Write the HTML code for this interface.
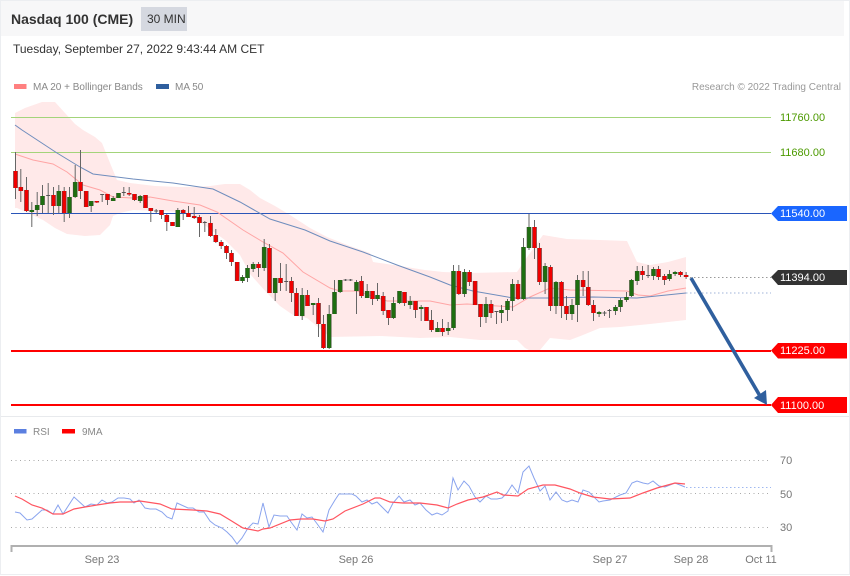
<!DOCTYPE html>
<html><head><meta charset="utf-8"><style>
html,body{margin:0;padding:0;background:#fff}
#c{position:relative;width:850px;height:576px;overflow:hidden;font-family:"Liberation Sans",sans-serif}
svg{position:absolute;left:0;top:0}
</style></head><body><div id="c">
<svg width="850" height="576" viewBox="0 0 850 576" font-family="Liberation Sans, sans-serif">
<rect x="0.5" y="0.5" width="849" height="574" fill="#fff" stroke="#eceef1"/>
<rect x="1" y="1" width="843" height="35" fill="#f7f7f8"/>
<rect x="141" y="7" width="46" height="24" fill="#d5d8e0"/>
<text x="11" y="24" font-size="14" font-weight="bold" fill="#333">Nasdaq 100 (CME)</text>
<text x="147" y="23" font-size="12" fill="#333">30 MIN</text>
<text x="13" y="53" font-size="12" fill="#333">Tuesday, September 27, 2022 9:43:44 AM CET</text>
<rect x="14" y="84" width="12.500" height="5" fill="#ff8080"/>
<text x="33" y="90" font-size="10" fill="#888">MA 20 + Bollinger Bands</text>
<rect x="156" y="84" width="13" height="5" fill="#2f5f9e"/>
<text x="175" y="90" font-size="10" fill="#888">MA 50</text>
<text x="841" y="90" font-size="10" fill="#999" text-anchor="end">Research © 2022 Trading Central</text>

<polygon fill="#ffe9e9" points="15,113 25,108 42,102 55,102 65,113 75,124 83,130 95,137 102,143 110,163 117,180 130,183 155,186 180,187 195,187 210,186 225,184 240,184 250,190 260,198 275,206 290,215 310,228 327,237 350,246 370,253 373,262 400,266 425,270 443,272 470,273 517,272 525,260 543,235 567,239 600,240 627,241 637,262 650,265 668,262 686,257 686,320 650,324 620,327 600,328 583,335 570,340 550,338 540,350 533,352 525,348 517,340 480,340 450,337 420,338 380,336 330,337 307,318 293,315 280,306 267,293 250,274 240,255 225,240 207,227 195,218 183,212 160,211 133,210 120,213 113,216 110,225 100,235 85,236 67,234 55,228 43,220 30,214 17,208 15,208"/>

<path d="M11 117.500H771M11 152.500H771" stroke="#a3d47a" stroke-width="1" fill="none"/>
<path d="M11 213.500H771" stroke="#2a55b8" stroke-width="1" fill="none"/>
<path d="M690 277.500H771" stroke="#999" stroke-width="1" stroke-dasharray="1.500 2.500" fill="none"/>
<path d="M686 293H771" stroke="#9fb3d8" stroke-width="1" stroke-dasharray="1.500 2.500" fill="none"/>
<path d="M11 351H771M11 405H771" stroke="#f00" stroke-width="2" fill="none"/>

<polyline fill="none" stroke="#ffa5a5" stroke-width="1" points="15,154 33,160 53,164 67,172 83,185 100,190 113,197 133,198 150,197 173,201 200,205 217,212 243,230 263,242 283,253 303,272 330,288 340,291 357,291 387,301 430,301 450,305 467,304 513,307 530,297 550,288 570,290 627,291 638,295 650,296 668,291 686,288"/>
<polyline fill="none" stroke="#6f8dbd" stroke-width="1" points="15,125 22,130 57,153 80,167 93,174 133,179 173,183 213,189 240,202 270,219 305,230 330,241 363,252 397,265 430,277 450,285 473,291 513,298 550,298 593,297 637,298 686,293"/>

<defs>
<path id="r" fill="none" d="M15 171V188M20.300 187V191M26 190V211M53 195V206M63.700 191V213M80 182V191M85.700 191V207M96.300 201V202.500M107 194V200M128.700 193V194.500M134 194V200M145 195V208M150.300 208V211M161 210V215M166.300 215V222M172 222V226M182.700 210V213M188 213V217M193.700 216V218M199 217V223M210 223V236M215.300 235V242M220.700 242V246M226 246V253M231 253V262M236.700 262V281M258 264V268M269 248V293M280 278V283M291 281V293M296 293V316M307 295V306M318 303V324M323 324V348M361 281V296M372 291V299M382.700 296V311M388 310V318M404 292V303M415 301V310M426 307V321M431 320V330M442 328V332M458.300 271V294M469 272V282M474.600 281V305M480 304V317M490.600 304V313M517.500 284V299M534 227V248M539 248V282M550 267V306M561 282V306M566 306V314M582.600 280V287M587.800 287V305M593 305V313M642 271V275M658 269V277M664 276V280M680 272V275M685.600 275V277"/>
<path id="g" fill="none" d="M31.300 210V212M36.700 205V210M42 196V205M58.300 191V206M69 197V213M74.700 182V197M90.700 201V206M112.700 198V201M118 193V198M139.700 196V201M177.300 210V227M242 277V281M247 268V278M252.700 264V269M263.700 247V268M274.700 278V293M301.700 295V316M312.700 303V305M328.700 314V348M334 292V314M339.700 280V292M356 282V291M366.700 291V298M377 295V299M393 303V318M399 291V303M409.700 301V305M420.700 307V309M437 328V332M447.700 328V331M453 271V328M464 272V294M485.500 304V317M501 310V313M507 301V310M512 284V301M523 247V299M528.500 227V248M544.600 266V282M555.500 282V306M571.500 305V314M577 280V305M598.600 312V314M615 307V311M620 300V307M626 297V300M631 280V296M636.700 271V281M653 269V276M669 274V279M674.600 272V274"/>
</defs>
<g transform="translate(0.500 0)">
<path fill="none" stroke="#666" stroke-width="1" d="M15 152V199M20.300 169V202M26 177V212M31.300 202V227M36.700 192V216M42 185V213M47.700 183V213M53 187V215M58.300 185V213M63.700 187V222M69 187V218M74.700 165V198M80 150V199M85.700 191V207M90.700 201V212M96.300 201V203M101.700 194V202M107 194V205M112.700 196V201M118 193V198M123.300 187V196M128.700 187V196M134 194V201M139.700 195V203M145 195V208M150.300 208V222M155.700 209V213M161 210V219M166.300 214V231M172 222V226M177.300 208V227M182.700 209V220M188 206V217M193.700 207V219M199 215V237M204.300 221V232M210 216V237M215.300 229V243M220.700 240V249M226 245V259M231 250V266M236.700 262V281M242 275V283M247 265V282M252.700 262V272M258 262V277M263.700 239V271M269 244V293M274.700 278V301M280 263V291M285.700 264V291M291 277V302M296 288V316M301.700 288V320M307 290V306M312.700 303V315M318 298V337M323 315V349M328.700 305V349M334 280V314M339.700 280V293M345 279V281M350 279V281M356 280V314M361 276V298M366.700 284V298M372 291V305M377 283V301M382.700 292V315M388 310V325M393 297V319M399 291V304M404 292V306M409.700 296V309M415 301V318M420.700 305V321M426 307V321M431 310V332M437 322V332M442 319V336M447.700 322V335M453 265V330M458.300 265V295M464 269V297M469 270V286M474.600 281V305M480 304V327M485.500 297V323M490.600 300V318M496 311V324M501 305V323M507 299V321M512 279V311M517.500 280V300M523 238V300M528.500 214V250M534 220V259M539 243V285M544.600 263V294M550 265V311M555.500 281V314M561 281V318M566 296V320M571.500 299V320M577 275V322M582.600 271V296M587.800 271V306M593 300V321M598.600 311V317M604 311V316M609 309V318M615 305V315M620 298V312M626 292V302M631 279V297M636.700 266V285M642 266V280M647.600 265V278M653 267V280M658 266V280M664 274V285M669 270V281M674.600 271V276M680 271V277M685.600 272V279"/>
<path fill="none" stroke="#555" stroke-width="1" d="M101.700 194.500h-2h4M123.300 192.500h-2h4M155.700 211h-2h4M204.300 222.500h-2h4M285.700 281.500h-2h4M345 280h-2h4M350 280h-2h4M47.700 195.500h-2h4M496 311.500h-2h4M604 313h-2h4M609 310.500h-2h4M647.600 275.500h-2h4"/>
<use href="#r" stroke="#5a3a3a" stroke-width="4.600"/>
<use href="#g" stroke="#3f4f35" stroke-width="4.600"/>
<use href="#r" stroke="#f00000" stroke-width="3.400"/>
<use href="#g" stroke="#1e6e10" stroke-width="3.400"/>
</g>

<path d="M691 278L760 396" stroke="#2f5f9e" stroke-width="3.600" fill="none"/>
<polygon points="767,405 766,390 754,398" fill="#2f5f9e"/>

<text x="780" y="121" font-size="11" fill="#4c9a00">11760.00</text>
<text x="780" y="156" font-size="11" fill="#4c9a00">11680.00</text>
<polygon points="771,213.500 778,206 847,206 847,221 778,221" fill="#1a66ff"/>
<text x="780" y="217" font-size="11" fill="#fff">11540.00</text>
<polygon points="771,277 778,270 847,270 847,285 778,285" fill="#333"/>
<text x="780" y="281" font-size="11" fill="#fff">11394.00</text>
<polygon points="771,350.500 778,343 847,343 847,358.500 778,358.500" fill="#f00"/>
<text x="780" y="354" font-size="11" fill="#fff">11225.00</text>
<polygon points="771,405 778,397 847,397 847,413 778,413" fill="#f00"/>
<text x="780" y="409" font-size="11" fill="#fff">11100.00</text>

<path d="M1 416.500H849" stroke="#e8eaed" stroke-width="1"/>
<rect x="14" y="429" width="12.500" height="4.500" fill="#5b7fe0"/>
<text x="33" y="435" font-size="10" fill="#888">RSI</text>
<rect x="62" y="429" width="13" height="4.500" fill="#f00"/>
<text x="82" y="435" font-size="10" fill="#888">9MA</text>

<path d="M11 460.500H771M11 493.500H771M11 527.500H771" stroke="#aaa" stroke-width="1" stroke-dasharray="1 3.500" fill="none"/>
<path d="M686 487.500H771" stroke="#9fb8f0" stroke-width="1" stroke-dasharray="1.500 2.500" fill="none"/>
<polyline fill="none" stroke="#8aa4ee" stroke-width="1" points="15,512 20,513 27,520 32,519 42,510 47,510 53,514 58,505 63,514 74,497 85,507 91,504 97,505 102,500 107,503 112,502 118,498 124,498 130,499 134,503 139,500 145,508 150,509 156,509 162,512 167,517 172,519 177,503 188,508 193,508 199,512 204,512 210,521 215,525 222,528 227,532 232,537 237,544 242,538 248,528 253,523 258,524 263,503 269,527 274,515 280,516 287,516 291,522 297,530 302,514 307,518 312,517 318,525 323,532 329,510 335,500 339,494 352,494 356,496 362,502 367,500 372,504 377,502 383,508 388,513 393,503 399,496 404,502 410,500 415,505 420,503 426,510 432,515 437,513 442,515 448,511 453,478 458,490 464,481 469,486 475,497 480,502 486,496 491,499 497,499 502,498 507,493 512,485 518,493 523,472 529,466 534,478 540,491 545,486 550,500 556,492 562,500 567,502 572,500 578,502 583,490 589,492 594,497 599,502 603,501 610,500 620,495 626,493 632,483 637,481 643,483 648,484 653,481 659,486 665,487 675,483 685,487"/>
<polyline fill="none" stroke="#ff5560" stroke-width="1.200" points="15,496 22,499 32,505 42,508 53,514 63,514 74,509 85,507 97,505 110,503 120,502 133,502 140,501 160,504 172,509 193,510 207,511 220,514 230,520 243,528 258,531 263,529 270,528 290,520 301,519 313,519 325,521 333,519 345,511 363,504 375,498 380,498 390,502 403,503 420,503 437,505 448,508 457,504 468,500 483,497 497,492 503,495 518,496 528,489 543,485 555,485 570,489 580,493 593,497 610,499 630,498 643,493 657,488 675,483 685,484"/>

<path d="M11.500 552V546H771.500V552" stroke="#b0b0b0" stroke-width="2" fill="none"/>
<g font-size="11" fill="#777">
<text x="780" y="464">70</text>
<text x="780" y="498">50</text>
<text x="780" y="531">30</text>
</g>
<g font-size="11" fill="#777" text-anchor="middle">
<text x="102" y="563">Sep 23</text>
<text x="356" y="563">Sep 26</text>
<text x="610" y="563">Sep 27</text>
<text x="691" y="563">Sep 28</text>
<text x="761" y="563">Oct 11</text>
</g>
</svg>
</div></body></html>
